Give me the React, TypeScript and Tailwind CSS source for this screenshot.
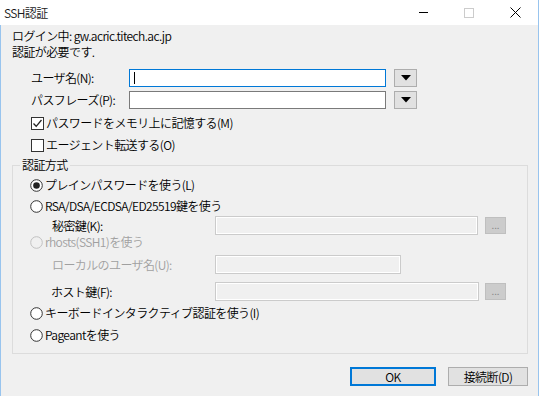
import React from "react";

const font = { fontFamily: '"Noto Sans CJK JP", "Noto Sans", sans-serif' };

function Checkbox({ checked }: { checked?: boolean }) {
  return (
    <div className="w-[13px] h-[13px] border border-[#333333] bg-white flex items-center justify-center shrink-0">
      {checked && (
        <svg width="11" height="11" viewBox="0 0 11 11">
          <path d="M1.5 5.5 L4.2 8.3 L9.5 2" fill="none" stroke="#222" strokeWidth="1.3" />
        </svg>
      )}
    </div>
  );
}

function Radio({ checked, disabled }: { checked?: boolean; disabled?: boolean }) {
  return (
    <svg width="13" height="13" viewBox="0 0 13 13" className="shrink-0">
      <circle cx="6.5" cy="6.5" r="5.8" fill={disabled ? "#f0f0f0" : "#ffffff"} stroke={disabled ? "#c0c0c0" : "#333333"} strokeWidth="1" />
      {checked && <circle cx="6.5" cy="6.5" r="3.3" fill="#222" />}
    </svg>
  );
}

function DropBtn() {
  return (
    <div className="w-[23px] h-[18px] bg-[#e1e1e1] border border-[#adadad] flex items-center justify-center shrink-0">
      <svg width="10" height="6" viewBox="0 0 10 6">
        <path d="M0 0 H10 L5 5.5 Z" fill="#000" />
      </svg>
    </div>
  );
}

function DisabledInput({ w }: { w: string }) {
  return <div className={`${w} h-[19px] shrink-0 bg-[#f0f0f0] border border-[#cbcbcb] shadow-[inset_0_0_0_1px_#ffffff]`} />;
}

function DotsBtn() {
  return (
    <div className="w-[21px] h-[17px] shrink-0 bg-[#cccccc] border border-[#bfbfbf] flex items-center justify-center text-[#8a8a8a] text-[10px] leading-none pb-[2px] tracking-normal">
      ...
    </div>
  );
}

export default function App() {
  return (
    <div className="w-[539px] h-[396px] flex flex-col text-[12px] font-[350] tracking-[-0.6px] text-black border-r border-[#98c4ee]" style={font}>
      {/* Title bar */}
      <div className="h-[25px] bg-white flex items-center shrink-0">
        <div className="pl-[4px] leading-none text-[12px] text-[#1a1a1a]">SSH認証</div>
        <div className="ml-auto flex items-center h-full">
          <div className="w-[46px] h-full flex items-center justify-center">
            <div className="w-[9px] h-px bg-black" />
          </div>
          <div className="w-[46px] h-full flex items-center justify-center">
            <div className="w-[10px] h-[10px] border border-[#cccccc]" />
          </div>
          <div className="w-[46px] h-full flex items-center justify-center">
            <svg width="11" height="11" viewBox="0 0 11 11">
              <path d="M0.5 0.5 L10.5 10.5 M10.5 0.5 L0.5 10.5" stroke="#000" strokeWidth="1" />
            </svg>
          </div>
        </div>
      </div>

      {/* Body */}
      <div className="flex-1 bg-[#f0f0f0] border-l border-[#98c4ee] pl-[11px] flex flex-col">
        <div className="mt-[3px] h-[16px] leading-[16px]">ログイン中: gw.acric.titech.ac.jp</div>
        <div className="h-[16px] leading-[16px]">認証が必要です.</div>

        <div className="mt-[9px] h-[18px] flex items-center">
          <div className="pl-[19px] w-[117px] shrink-0 leading-none">ユーザ名(N):</div>
          <div className="w-[257px] h-[18px] shrink-0 bg-white border border-[#0078d7] flex items-center pl-[4px]">
            <div className="w-px h-[12px] bg-black" />
          </div>
          <div className="ml-[8px]"><DropBtn /></div>
        </div>
        <div className="mt-[4px] h-[18px] flex items-center">
          <div className="pl-[19px] w-[117px] shrink-0 leading-none">パスフレーズ(P):</div>
          <div className="w-[257px] h-[18px] shrink-0 bg-white border border-[#7a7a7a]" />
          <div className="ml-[8px]"><DropBtn /></div>
        </div>

        <div className="mt-[7px] h-[14px] flex items-center pl-[19px] gap-[2px]">
          <Checkbox checked />
          <span className="leading-none">パスワードをメモリ上に記憶する(M)</span>
        </div>
        <div className="mt-[8px] h-[14px] flex items-center pl-[19px] gap-[2px]">
          <Checkbox />
          <span className="leading-none">エージェント転送する(O)</span>
        </div>

        {/* Group box */}
        <div className="relative mt-[13px] w-[516px] h-[189px] border border-[#dcdcdc] flex flex-col">
          <div className="absolute left-[7px] top-[-9px] px-[2px] bg-[#f0f0f0] leading-[16px]">認証方式</div>

          <div className="mt-[12px] h-[14px] flex items-center pl-[17px] gap-[2px]">
            <Radio checked />
            <span className="leading-none">プレインパスワードを使う(L)</span>
          </div>
          <div className="mt-[7px] h-[14px] flex items-center pl-[17px] gap-[2px]">
            <Radio />
            <span className="leading-none">RSA/DSA/ECDSA/ED25519鍵を使う</span>
          </div>
          <div className="mt-[3px] h-[19px] flex items-center">
            <div className="pl-[39px] w-[202px] shrink-0 leading-none">秘密鍵(K):</div>
            <DisabledInput w="w-[263px]" />
            <div className="ml-[7px]"><DotsBtn /></div>
          </div>
          <div className="h-[14px] flex items-center pl-[17px] gap-[2px]">
            <Radio disabled />
            <span className="leading-none text-[#a0a0a0]">rhosts(SSH1)を使う</span>
          </div>
          <div className="mt-[6px] h-[19px] flex items-center">
            <div className="pl-[39px] w-[202px] shrink-0 leading-none text-[#a0a0a0]">ローカルのユーザ名(U):</div>
            <DisabledInput w="w-[186px]" />
          </div>
          <div className="mt-[8px] h-[19px] flex items-center">
            <div className="pl-[38px] w-[202px] shrink-0 leading-none">ホスト鍵(F):</div>
            <DisabledInput w="w-[264px]" />
            <div className="ml-[6px]"><DotsBtn /></div>
          </div>
          <div className="mt-[5px] h-[14px] flex items-center pl-[17px] gap-[2px]">
            <Radio />
            <span className="leading-none">キーボードインタラクティブ認証を使う(I)</span>
          </div>
          <div className="mt-[8px] h-[14px] flex items-center pl-[17px] gap-[2px]">
            <Radio />
            <span className="leading-none">Pageantを使う</span>
          </div>
        </div>

        {/* Buttons */}
        <div className="mt-[13px] flex justify-end pr-[10px] gap-[12px]">
          <div className="w-[86px] h-[19px] bg-[#e1e1e1] border-2 border-[#0078d7] flex items-center justify-center leading-none">OK</div>
          <div className="w-[80px] h-[19px] bg-[#e1e1e1] border border-[#adadad] flex items-center justify-center leading-none">接続断(D)</div>
        </div>
      </div>
    </div>
  );
}
